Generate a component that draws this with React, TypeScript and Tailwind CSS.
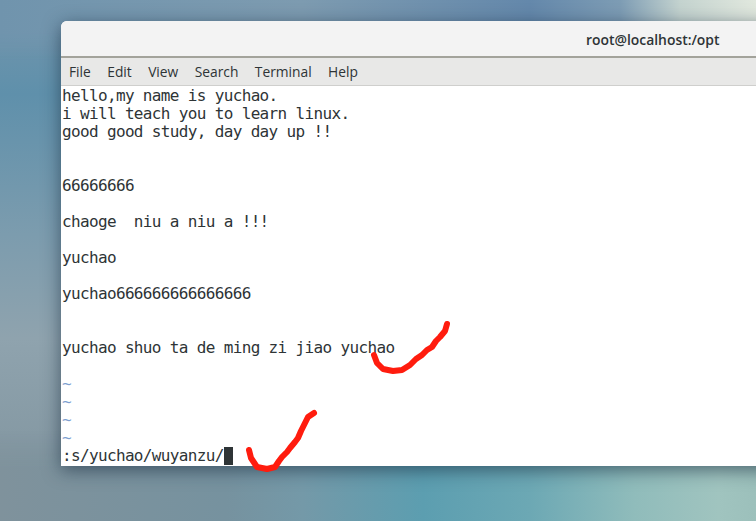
const lines = [
  'hello,my name is yuchao.',
  'i will teach you to learn linux.',
  'good good study, day day up !!',
  '',
  '',
  '66666666',
  '',
  'chaoge  niu a niu a !!!',
  '',
  'yuchao',
  '',
  'yuchao666666666666666',
  '',
  '',
  'yuchao shuo ta de ming zi jiao yuchao',
  '',
]

const menus = ['File', 'Edit', 'View', 'Search', 'Terminal', 'Help']

function App() {
  return (
    <div className="relative h-[521px] w-[756px] overflow-hidden bg-[linear-gradient(180deg,#7596ac_0%,#5f90ab_18%,#7c9cae_45%,#8fa3ae_65%,#7e929c_100%)]">
      {/* wallpaper, only the strips round the window show */}
      <div className="absolute inset-x-0 top-0 h-[60px] bg-[linear-gradient(90deg,#7094ad_0%,#7d9bb0_40%,#6488ab_70%,#7d9cb4_82%,#c4d3cf_90%,#e1e8de_100%)] [mask-image:linear-gradient(to_bottom,black_50%,transparent)]" />
      <div className="absolute inset-x-0 bottom-0 h-[90px] bg-[linear-gradient(90deg,#7f929c_0%,#76929f_30%,#7499a8_40%,#5c9eb0_56%,#6ca8b4_70%,#90bcbb_84%,#a0c4bf_95%,#9cc0bb_100%)] [mask-image:linear-gradient(to_top,black_60%,transparent)]" />

      <div className="absolute left-[61px] top-[21px] w-[720px] rounded-t-[6px] bg-white shadow-[0_4px_18px_rgba(20,40,60,0.6)]">
        <div className="flex h-[37px] items-center rounded-t-[6px] border-b-2 border-[#a3a39b] bg-[#f3f3f3] pl-[525px] pt-[3px] font-['Open_Sans',sans-serif] text-[13.9px] font-semibold leading-none text-[#2e3436]">
          root@localhost:/opt
        </div>
        <div className="flex h-[28px] items-center gap-[16.4px] border-b border-[#cfcfcd] bg-[#e8e8e7] pl-[8px] font-['Open_Sans',sans-serif] text-[13.8px] leading-none text-[#2e3436]">
          {menus.map(m => (
            <span key={m}>{m}</span>
          ))}
        </div>
        <div className="h-[380px] pl-px pt-px font-['DejaVu_Sans_Mono',monospace] text-[16px] leading-[18px] tracking-[-0.65px] whitespace-pre text-[#2e3436]">
          {lines.map((line, i) => (
            <div key={i} className="h-[18px]">{line}</div>
          ))}
          {[0, 1, 2, 3].map(i => (
            <div key={i} className="h-[18px] text-[#7d9fd0]">~</div>
          ))}
          <div className="flex h-[18px]">
            <span>:s/yuchao/wuyanzu/</span>
            <span className="h-[18px] w-[9px] bg-[#2e3436]" />
          </div>
        </div>
      </div>

      {/* red marks drawn over the shot */}
      <svg className="absolute left-0 top-0" width="756" height="521" fill="none" stroke="#ff1c0e" strokeWidth="6" strokeLinecap="round" strokeLinejoin="round">
        <polyline points="374,355 377,363 383,369 393,371 402,370 410,365 416,359 422,355 427,350 432,347 436,341 440,337 445,331 447,324" />
        <polyline points="249,450 251,458 257,467 267,469 275,467 279,461 282,457 287,452 290,448 295,442 298,438 301,431 303,427 306,421 308,417 314,413" />
      </svg>
    </div>
  )
}

export default App
